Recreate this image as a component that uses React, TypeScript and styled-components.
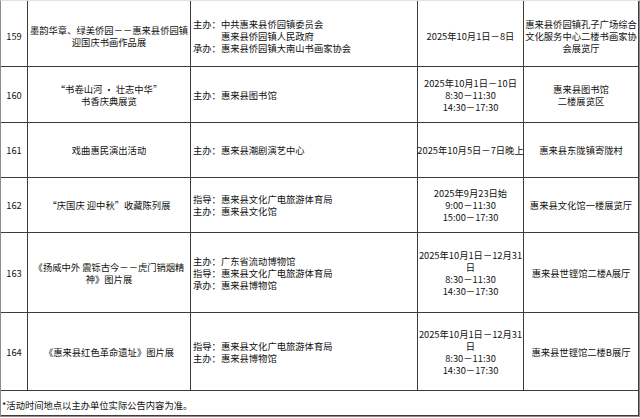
import React from "react";
import styled, { createGlobalStyle } from "styled-components";

const Global = createGlobalStyle`
  html, body { margin: 0; padding: 0; background: #fff; }
  body { font-family: "Noto Sans CJK SC", "Noto Sans", sans-serif; }
`;

const COLS = "27px 163px 227px 106px 115px";

const Table = styled.div`
  width: 640px;
  box-sizing: border-box;
  border-left: 1px solid #8c8c8c;
  border-right: 1px solid #8c8c8c;
  border-bottom: 1px solid #8c8c8c;
  border-top: 1px solid #e2e2e2;
  font-family: "Noto Sans CJK SC", "Noto Sans", sans-serif;
  font-size: 9.3px;
  line-height: 12px;
  color: #111;
`;

const Row = styled.div<{ $h: number }>`
  display: grid;
  grid-template-columns: ${COLS};
  height: ${(p) => p.$h}px;
`;

const Cell = styled.div<{ $align?: "left" | "center"; $padTop?: number }>`
  box-sizing: border-box;
  border-right: 1px solid #3c3c3c;
  border-bottom: 1px solid #3c3c3c;
  display: flex;
  flex-direction: column;
  justify-content: center;
  align-items: ${(p) => (p.$align === "left" ? "flex-start" : "center")};
  text-align: ${(p) => (p.$align === "left" ? "left" : "center")};
  padding: ${(p) => p.$padTop ?? 0}px 1px 0 ${(p) => (p.$align === "left" ? 2 : 1)}px;
  white-space: nowrap;
  overflow: hidden;
`;

const Line = styled.div`
  white-space: nowrap;
`;

const OrgGrid = styled.div`
  display: grid;
  grid-template-columns: auto auto;
  column-gap: 0;
`;

const OrgLabel = styled.span`
  white-space: nowrap;
`;

const OrgValue = styled.span`
  white-space: nowrap;
`;

const Footer = styled.div`
  box-sizing: border-box;
  height: 25px;
  border-right: 1px solid #3c3c3c;
  border-bottom: 1px solid #3c3c3c;
  display: flex;
  align-items: center;
  padding: 3px 0 0 1px;
`;

type Org = { label: string; lines: string[] };
type Item = {
  no: string;
  h: number;
  title: string[];
  orgs: Org[];
  date: string[];
  place: string[];
  padTop?: number;
};

const items: Item[] = [
  {
    no: "159",
    h: 66,
    padTop: 4,
    title: ["墨韵华章、绿美侨园－－惠来县侨园镇", "迎国庆书画作品展"],
    orgs: [
      { label: "主办：", lines: ["中共惠来县侨园镇委员会", "惠来县侨园镇人民政府"] },
      { label: "承办：", lines: ["惠来县侨园镇大南山书画家协会"] },
    ],
    date: ["2025年10月1日－8日"],
    place: ["惠来县侨园镇孔子广场综合", "文化服务中心二楼书画家协", "会展览厅"],
  },
  {
    no: "160",
    h: 56,
    title: ["“书卷山河 · 壮志中华”", "书香庆典展览"],
    orgs: [{ label: "主办：", lines: ["惠来县图书馆"] }],
    date: ["2025年10月1日－10日", "8:30－11:30", "14:30－17:30"],
    place: ["惠来县图书馆", "二楼展览区"],
  },
  {
    no: "161",
    h: 55,
    title: ["戏曲惠民演出活动"],
    orgs: [{ label: "主办：", lines: ["惠来县潮剧演艺中心"] }],
    date: ["2025年10月5日－7日晚上"],
    place: ["惠来县东陇镇寄陇村"],
  },
  {
    no: "162",
    h: 55,
    title: ["“庆国庆 迎中秋”收藏陈列展"],
    orgs: [
      { label: "指导：", lines: ["惠来县文化广电旅游体育局"] },
      { label: "主办：", lines: ["惠来县文化馆"] },
    ],
    date: ["2025年9月23日始", "9:00－11:30", "15:00－17:30"],
    place: ["惠来县文化馆一楼展览厅"],
  },
  {
    no: "163",
    h: 80,
    title: ["《扬威中外 震铄古今－－虎门销烟精", "神》图片展"],
    orgs: [
      { label: "主办：", lines: ["广东省流动博物馆"] },
      { label: "指导：", lines: ["惠来县文化广电旅游体育局"] },
      { label: "承办：", lines: ["惠来县博物馆"] },
    ],
    date: ["2025年10月1日－12月31", "日", "8:30－11:30", "14:30－17:30"],
    place: ["惠来县世铿馆二楼A展厅"],
  },
  {
    no: "164",
    h: 78,
    title: ["《惠来县红色革命遗址》图片展"],
    orgs: [
      { label: "指导：", lines: ["惠来县文化广电旅游体育局"] },
      { label: "主办：", lines: ["惠来县博物馆"] },
    ],
    date: ["2025年10月1日－12月31", "日", "8:30－11:30", "14:30－17:30"],
    place: ["惠来县世铿馆二楼B展厅"],
  },
];

function Lines({ lines }: { lines: string[] }) {
  return (
    <>
      {lines.map((l, i) => (
        <Line key={i}>{l}</Line>
      ))}
    </>
  );
}

export default function App() {
  return (
    <>
      <Global />
      <Table>
        {items.map((it) => (
          <Row key={it.no} $h={it.h}>
            <Cell $padTop={it.padTop}>{it.no}</Cell>
            <Cell $padTop={it.padTop}>
              <Lines lines={it.title} />
            </Cell>
            <Cell $align="left" $padTop={it.padTop}>
              <OrgGrid>
                {it.orgs.map((o, i) => (
                  <React.Fragment key={i}>
                    <OrgLabel>{o.label}</OrgLabel>
                    <OrgValue>
                      <Lines lines={o.lines} />
                    </OrgValue>
                  </React.Fragment>
                ))}
              </OrgGrid>
            </Cell>
            <Cell $padTop={it.padTop}>
              <Lines lines={it.date} />
            </Cell>
            <Cell $padTop={it.padTop}>
              <Lines lines={it.place} />
            </Cell>
          </Row>
        ))}
        <Footer>*活动时间地点以主办单位实际公告内容为准。</Footer>
      </Table>
    </>
  );
}
